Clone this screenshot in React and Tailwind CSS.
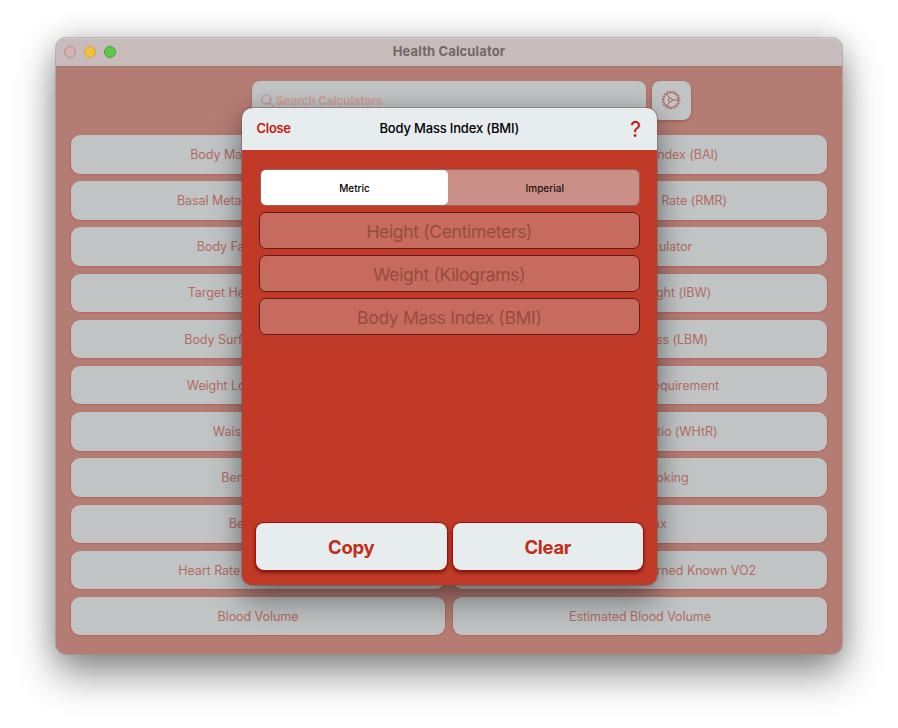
import React from "react";

const calculators = [
  ["Body Mass Index (BMI)", "Body Adiposity Index (BAI)"],
  ["Basal Metabolic Rate (BMR)", "Resting Metabolic Rate (RMR)"],
  ["Body Fat Percentage", "Calorie Calculator"],
  ["Target Heart Rate (THR)", "Ideal Body Weight (IBW)"],
  ["Body Surface Area (BSA)", "Lean Body Mass (LBM)"],
  ["Weight Loss Percentage", "Daily Calories Requirement"],
  ["Waist-Hip Ratio", "Waist-Height Ratio (WHtR)"],
  ["Bench Press", "Cost of Smoking"],
  ["Beep Test", "VO2 Max"],
  ["Heart Rate Calories Burned", "Heart Rate Calories Burned Known VO2"],
  ["Blood Volume", "Estimated Blood Volume"],
];

function CalcButton({ children }) {
  return (
    <button className="flex h-[38.5px] items-center justify-center rounded-[9px] bg-[#c0c4c5] pt-[2px] text-[12.5px] tracking-[-0.05px] whitespace-nowrap text-[#b36b61] shadow-[0_0.5px_1px_0.3px_#b96761]">
      {children}
    </button>
  );
}

function Gear() {
  return (
    <svg width="20" height="20" viewBox="0 0 20 20" fill="none" stroke="#b3605a">
      <circle cx="10" cy="10" r="7.5" strokeWidth="1.1" />
      <circle cx="10" cy="10" r="8.8" strokeWidth="1.2" strokeDasharray="1.45 1.622" />
      <circle cx="9.4" cy="10" r="1.9" strokeWidth="1" />
      <path d="M11.3 10h6.2M8.5 8.3 5.8 3.8M8.5 11.7l-2.7 4.5" strokeWidth="1" />
    </svg>
  );
}

function Field({ children }) {
  return (
    <div className="flex h-[37px] items-center justify-center rounded-[7px] border border-[#5e1d17] bg-[#c66b5e] pt-[3px] text-[17.6px] tracking-[-0.38px] text-[#974b40]">
      {children}
    </div>
  );
}

function ActionButton({ children }) {
  return (
    <button className="flex h-[47px] flex-1 items-center justify-center rounded-[8px] bg-[#e7ecef] pt-0.5 text-[18.5px] font-bold tracking-[-0.3px] text-[#c02d18] shadow-[0_0_0_1px_#a90d08,0_2px_4px_#5e0903]">
      {children}
    </button>
  );
}

function Modal() {
  return (
    <section className="absolute top-[70px] left-[185.5px] flex h-[476.5px] w-[415.5px] flex-col overflow-hidden rounded-[10px] bg-[#c03a27] shadow-[0_0_0_0.7px_rgba(115,65,60,0.5),0_16px_32px_rgba(0,0,0,0.4),0_0_20px_rgba(0,0,0,0.14)]">
      <header className="grid h-[42px] shrink-0 grid-cols-[1fr_auto_1fr] items-center bg-[#e7ecef] px-[15px] text-[13px]">
        <span className="font-semibold tracking-[-0.3px] text-[#c4190b]">Close</span>
        <h2 className="font-medium tracking-[-0.18px] text-black">Body Mass Index (BMI)</h2>
        <span className="justify-self-end pr-px text-[21px] leading-none text-[#c90b04]">?</span>
      </header>
      <div className="flex flex-1 flex-col px-[17.5px] pt-[19px]">
        <div className="ml-px flex h-[37px] shrink-0 rounded-[6px] border border-[#98635c] bg-[#c98f87] text-[10px] font-medium text-[#1c1110]">
          <div className="flex w-[187px] items-center justify-center rounded-[5px] bg-white pt-px text-black">Metric</div>
          <div className="flex flex-1 items-center justify-center pt-px pl-[3px]">Imperial</div>
        </div>
        <div className="mt-[6px] flex flex-col gap-[6px]">
          <Field>Height (Centimeters)</Field>
          <Field>Weight (Kilograms)</Field>
          <Field>Body Mass Index (BMI)</Field>
        </div>
      </div>
      <footer className="flex gap-[6px] pr-[14px] pb-[14.5px] pl-[14.5px]">
        <ActionButton>Copy</ActionButton>
        <ActionButton>Clear</ActionButton>
      </footer>
    </section>
  );
}

export default function App() {
  return (
    <main className="h-[728px] w-[898px] overflow-hidden bg-white px-[56px] pt-[38px] font-['Inter','Liberation_Sans',sans-serif]">
      <div className="relative h-[616px] w-[786px] rounded-[10px] bg-[#b47d74] shadow-[0_0_0_1px_rgba(150,140,140,0.5),0_20px_40px_rgba(0,0,0,0.44),0_0_28px_rgba(0,0,0,0.18)]">
        <header className="grid h-[29px] grid-cols-[1fr_auto_1fr] items-center rounded-t-[10px] border-b border-[#9c7771] bg-[#c7bcbb] px-2 inset-shadow-[0_1px_0_#d3cccc]">
          <div className="flex gap-2">
            <i className="size-3 rounded-full border border-[#b4908b] bg-[#d4b4b0]" />
            <i className="size-3 rounded-full border border-[#dda036] bg-[#f6be40]" />
            <i className="size-3 rounded-full border border-[#4ba638] bg-[#60c54b]" />
          </div>
          <h1 className="text-[13px] font-bold tracking-[0.13px] text-[#736765]">Health Calculator</h1>
        </header>
        <div className="mt-[14px] flex h-[39px] gap-[6px] pl-[196px]">
          <div className="flex h-[38.5px] w-[394px] items-center gap-[2px] rounded-[8px] bg-[#bfc3c4] px-[9px] text-[11.5px] font-bold text-[#cf9f99] shadow-[0_1px_2px_rgba(120,40,30,0.4)]">
            <svg width="13" height="13" viewBox="0 0 13 13" fill="none" stroke="#c88c85" strokeWidth="1.1" strokeLinecap="round">
              <circle cx="5.3" cy="5.3" r="4.6" />
              <path d="m8.8 8.8 3.6 3.6" />
            </svg>
            <span className="pt-0.5">Search Calculators</span>
          </div>
          <button className="flex h-[38.5px] w-[38.5px] items-center justify-center rounded-[8px] bg-[#c0c4c5] shadow-[0_1px_3px_rgba(120,40,30,0.45)]">
            <Gear />
          </button>
        </div>
        <div className="mt-[15px] grid grid-cols-2 gap-x-2 gap-y-[7.7px] px-[15px]">
          {calculators.flat().map((name) => (
            <CalcButton key={name}>{name}</CalcButton>
          ))}
        </div>
        <Modal />
      </div>
    </main>
  );
}
